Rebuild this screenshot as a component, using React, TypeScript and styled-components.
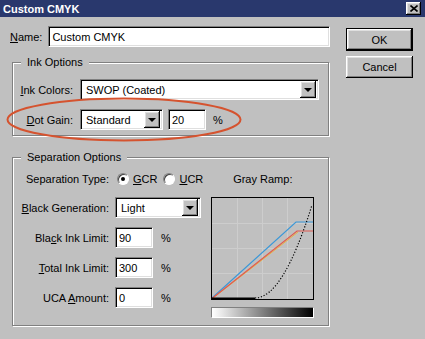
import React from "react";
import styled, { createGlobalStyle, css } from "styled-components";

const Global = createGlobalStyle`
  html, body { margin: 0; padding: 0; background: #c0c0c0; overflow: hidden; }
  body { font-family: "Liberation Sans", Arial, sans-serif; font-size: 11px; color: #000; }
`;

const raised = css`
  background: #c0c0c0;
  box-shadow: inset -1px -1px #000, inset 1px 1px #fff, inset -2px -2px #808080, inset 2px 2px #dfdfdf;
`;

const sunken = css`
  background: #fff;
  border: 1px solid;
  border-color: #808080 #fff #fff #808080;
  box-shadow: inset 1px 1px #000, inset -1px -1px #dfdfdf;
  box-sizing: border-box;
`;

const Page = styled.div`
  position: relative;
  width: 425px;
  height: 339px;
  background: #c0c0c0;
  overflow: hidden;
`;

const TitleBar = styled.div`
  height: 17px;
  display: flex;
  align-items: center;
  justify-content: space-between;
  padding: 0 4px 0 3px;
  background: #29386d;
  color: #fff;
  font-weight: bold;
  font-size: 11px;
`;

const CloseButton = styled.div`
  ${raised};
  width: 15px;
  height: 13px;
  display: flex;
  align-items: center;
  justify-content: center;
`;

const Client = styled.div`
  display: flex;
  gap: 16px;
  padding: 9px 0 0 10px;
`;

const LeftCol = styled.div`
  width: 320px;
  display: flex;
  flex-direction: column;
`;

const RightCol = styled.div`
  display: flex;
  flex-direction: column;
  gap: 5px;
  padding-top: 2px;
`;

const Row = styled.div<{ $gap?: number; $h?: number }>`
  display: flex;
  align-items: center;
  gap: ${(p) => p.$gap ?? 6}px;
  height: ${(p) => p.$h ?? 21}px;
`;

const Label = styled.span<{ $w?: number }>`
  ${(p) => (p.$w ? `width: ${p.$w}px; text-align: right;` : "")}
  white-space: nowrap;
  flex: none;
`;

const Mn = styled.span`
  text-decoration: underline;
  text-underline-offset: 1px;
`;

const TextField = styled.div<{ $w: number }>`
  ${sunken};
  width: ${(p) => p.$w}px;
  height: 21px;
  display: flex;
  align-items: center;
  padding-left: 3px;
  flex: none;
`;

const SelectBox = styled.div<{ $w: number }>`
  ${sunken};
  width: ${(p) => p.$w}px;
  height: 21px;
  display: flex;
  align-items: center;
  justify-content: space-between;
  padding: 0 2px 0 5px;
  flex: none;
`;

const DropButton = styled.div`
  ${raised};
  width: 16px;
  height: 17px;
  display: flex;
  align-items: center;
  justify-content: center;
`;

const Arrow = styled.div`
  width: 0;
  height: 0;
  border-left: 4px solid transparent;
  border-right: 4px solid transparent;
  border-top: 4px solid #000;
`;

const Group = styled.div<{ $mt: number }>`
  position: relative;
  margin: ${(p) => p.$mt}px 0 0 2px;
  width: 317px;
  box-sizing: border-box;
  border: 1px solid #808080;
  box-shadow: inset 1px 1px #fff, 1px 1px #fff;
`;

const Legend = styled.span`
  position: absolute;
  top: -7px;
  left: 8px;
  padding: 0 6px;
  line-height: 13px;
  background: #c0c0c0;
`;

const InkBody = styled.div`
  display: flex;
  flex-direction: column;
  gap: 9px;
  padding: 16px 0 5px 6px;
`;

const SepBody = styled.div`
  display: flex;
  gap: 8px;
  padding: 12px 0 7px 6px;
`;

const SepLeft = styled.div`
  display: flex;
  flex-direction: column;
  gap: 9px;
`;

const SepRight = styled.div`
  width: 103px;
  display: flex;
  flex-direction: column;
`;

const RampLabel = styled.div`
  height: 18px;
  line-height: 18px;
  text-align: center;
  margin-bottom: 9px;
`;

const RampBar = styled.div`
  margin-top: 7px;
  height: 11px;
  box-sizing: border-box;
  border: 1px solid;
  border-color: #808080 #fff #fff #808080;
  background: linear-gradient(to right, #fff 0%, #e8e8e8 10%, #000 100%);
`;

const Radio = styled.span<{ $checked?: boolean }>`
  position: relative;
  width: 12px;
  height: 12px;
  box-sizing: border-box;
  border-radius: 50%;
  background: #fff;
  border: 1px solid;
  border-color: #808080 #fff #fff #808080;
  box-shadow: inset 1px 1px #404040;
  display: inline-flex;
  align-items: center;
  justify-content: center;
  flex: none;
  &::after {
    content: "";
    width: 4px;
    height: 4px;
    border-radius: 50%;
    background: ${(p) => (p.$checked ? "#000" : "transparent")};
  }
`;

const RadioItem = styled.span`
  display: inline-flex;
  align-items: center;
  gap: 4px;
`;

const RadioSet = styled.div`
  display: flex;
  align-items: center;
  gap: 6px;
  margin-left: 2px;
`;

const PushButton = styled.div<{ $default?: boolean }>`
  ${raised};
  width: 67px;
  height: ${(p) => (p.$default ? 23 : 22)}px;
  box-sizing: border-box;
  display: flex;
  align-items: center;
  justify-content: center;
  ${(p) => (p.$default ? "border: 1px solid #000;" : "")}
`;

const Ellipse = styled.svg`
  position: absolute;
  left: 5px;
  top: 96px;
  pointer-events: none;
`;

function Select({ w, value }: { w: number; value: string }) {
  return (
    <SelectBox $w={w}>
      <span>{value}</span>
      <DropButton>
        <Arrow />
      </DropButton>
    </SelectBox>
  );
}

function RampChart() {
  const grid = [26.5, 51.5, 76.5];
  return (
    <svg width="103" height="103" viewBox="0 0 103 103">
      {grid.map((g) => (
        <g key={g} stroke="#cdcdcd" strokeWidth="1">
          <line x1={g} y1="1" x2={g} y2="102" />
          <line x1="1" y1={g} x2="102" y2={g} />
        </g>
      ))}
      <polyline points="1,101 85,25 102,25" fill="none" stroke="#3b98d8" strokeWidth="1.2" />
      <polyline points="2,101 87,35" fill="none" stroke="#e8b440" strokeWidth="1" />
      <polyline points="1,101.5 86,34 102,34" fill="none" stroke="#e05a50" strokeWidth="1.2" />
      <line x1="1" y1="101.5" x2="44" y2="101.5" stroke="#000" strokeWidth="2" />
      <path d="M44,101 Q72,101 101,8" fill="none" stroke="#000" strokeWidth="1.2" strokeDasharray="1.2 1.8" />
      <rect x="0.5" y="0.5" width="102" height="102" fill="none" stroke="#000" strokeWidth="1" />
    </svg>
  );
}

export default function App() {
  return (
    <Page>
      <Global />
      <TitleBar>
        <span>Custom CMYK</span>
        <CloseButton>
          <svg width="8" height="7" viewBox="0 0 8 7">
            <path d="M0.5,0.5 L7.5,6.5 M7.5,0.5 L0.5,6.5" stroke="#000" strokeWidth="1.6" />
          </svg>
        </CloseButton>
      </TitleBar>
      <Client>
        <LeftCol>
          <Row $gap={6}>
            <Label>
              <Mn>N</Mn>ame:
            </Label>
            <TextField $w={282}>Custom CMYK</TextField>
          </Row>

          <Group $mt={15}>
            <Legend>Ink Options</Legend>
            <InkBody>
              <Row $gap={7}>
                <Label $w={54}>
                  <Mn>I</Mn>nk Colors:
                </Label>
                <Select w={239} value="SWOP (Coated)" />
              </Row>
              <Row $gap={7}>
                <Label $w={54}>
                  <Mn>D</Mn>ot Gain:
                </Label>
                <Select w={83} value="Standard" />
                <TextField $w={38} style={{ marginLeft: -2 }}>20</TextField>
                <Label>%</Label>
              </Row>
            </InkBody>
          </Group>

          <Group $mt={21}>
            <Legend>Separation Options</Legend>
            <SepBody>
              <SepLeft>
                <Row $gap={6} $h={18}>
                  <Label $w={90}>Separation Type:</Label>
                  <RadioSet>
                    <RadioItem>
                      <Radio $checked />
                      <span>
                        <Mn>G</Mn>CR
                      </span>
                    </RadioItem>
                    <RadioItem>
                      <Radio />
                      <span>
                        <Mn>U</Mn>CR
                      </span>
                    </RadioItem>
                  </RadioSet>
                </Row>
                <Row $gap={6}>
                  <Label $w={90}>
                    <Mn>B</Mn>lack Generation:
                  </Label>
                  <Select w={86} value="Light" />
                </Row>
                <Row $gap={6}>
                  <Label $w={90}>
                    Bla<Mn>c</Mn>k Ink Limit:
                  </Label>
                  <TextField $w={38}>90</TextField>
                  <Label style={{ marginLeft: 2 }}>%</Label>
                </Row>
                <Row $gap={6}>
                  <Label $w={90}>
                    <Mn>T</Mn>otal Ink Limit:
                  </Label>
                  <TextField $w={38}>300</TextField>
                  <Label style={{ marginLeft: 2 }}>%</Label>
                </Row>
                <Row $gap={6}>
                  <Label $w={90}>
                    UCA <Mn>A</Mn>mount:
                  </Label>
                  <TextField $w={38}>0</TextField>
                  <Label style={{ marginLeft: 2 }}>%</Label>
                </Row>
              </SepLeft>
              <SepRight>
                <RampLabel>Gray Ramp:</RampLabel>
                <RampChart />
                <RampBar />
              </SepRight>
            </SepBody>
          </Group>
        </LeftCol>
        <RightCol>
          <PushButton $default>OK</PushButton>
          <PushButton>Cancel</PushButton>
        </RightCol>
      </Client>
      <Ellipse width="240" height="48" viewBox="0 0 240 48">
        <ellipse cx="119" cy="23.5" rx="116.5" ry="21" fill="none" stroke="#d5532f" strokeWidth="2" />
      </Ellipse>
    </Page>
  );
}
